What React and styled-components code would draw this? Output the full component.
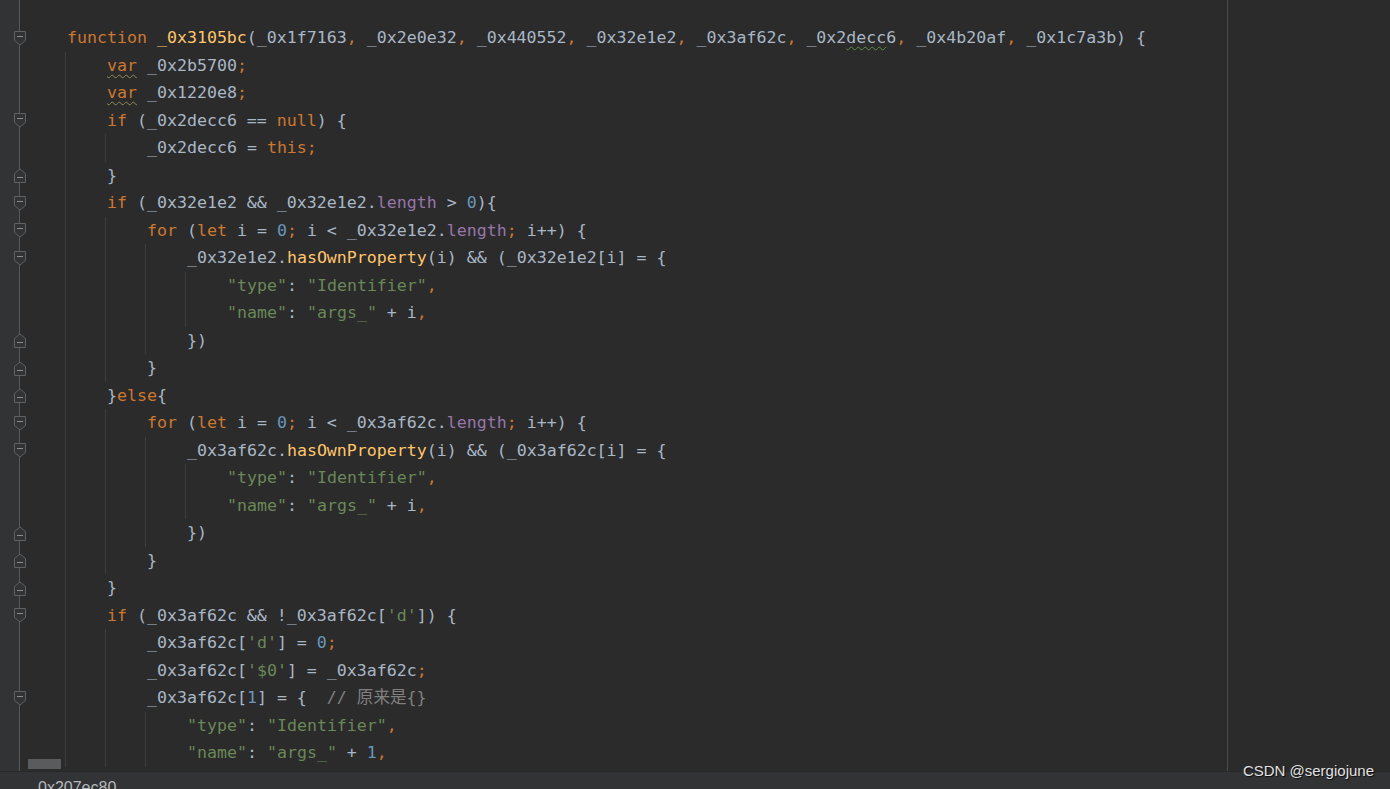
import React from 'react';
import styled, { createGlobalStyle } from 'styled-components';

const GlobalStyle = createGlobalStyle`
  * { box-sizing: border-box; }
  html, body {
    margin: 0;
    padding: 0;
    background: #2b2b2b;
    overflow: hidden;
  }
`;

const colors = {
  d: '#a9b7c6',
  k: '#cc7832',
  o: '#cc7832',
  n: '#6897bb',
  s: '#6a8759',
  p: '#9876aa',
  m: '#ffc66d',
  c: '#808080',
};

const Page = styled.div`
  position: relative;
  width: 1390px;
  height: 789px;
  overflow: hidden;
  background: #2b2b2b;
`;

const Editor = styled.div`
  position: relative;
  display: flex;
  height: 771px;
  overflow: hidden;
`;

const Gutter = styled.div`
  width: 20px;
  flex-shrink: 0;
  background: #313335;
  border-right: 1px solid #555759;
  padding-top: 24px;
`;

const FoldSlot = styled.div`
  display: flex;
  align-items: center;
  justify-content: flex-end;
  height: 27.5px;
  margin-right: -7px;
`;

const FoldMark = styled.svg`
  display: block;
  margin-top: 1px;
`;

const CodePane = styled.div`
  width: 1208px;
  flex-shrink: 0;
  border-right: 1px solid #4a4b4c;
  padding-top: 24px;
  padding-left: 45px;
  font-family: "DejaVu Sans Mono", "Noto Sans CJK SC", monospace;
  font-size: 16.6px;
  color: #a9b7c6;
`;

const Line = styled.div`
  display: flex;
  height: 27.5px;
  line-height: 27.5px;
  white-space: pre;
`;

const Guide = styled.span`
  width: 40px;
  flex-shrink: 0;
  border-left: 1px solid #3b3c3d;
`;

const Text = styled.span`
  padding-left: 2px;
`;

const Tok = styled.span`
  color: ${p => colors[p.$t] || colors.d};
  ${p => p.$wavy && `
    text-decoration: underline wavy ${p.$wavy};
    text-decoration-thickness: 1px;
    text-underline-offset: 3px;
  `}
`;

const Thumb = styled.div`
  position: absolute;
  left: 28px;
  bottom: 2px;
  width: 33px;
  height: 10px;
  background: #595b5d;
`;

const StatusBar = styled.div`
  height: 18px;
  background: #313335;
  border-top: 1px solid #282828;
  padding: 8px 0 0 38px;
  overflow: hidden;
  font-family: "Liberation Sans", Arial, sans-serif;
  font-size: 16px;
  line-height: 16px;
  color: #b4b8bc;
`;

const Watermark = styled.div`
  position: absolute;
  right: 16px;
  bottom: 10px;
  font-family: "Liberation Sans", Arial, sans-serif;
  font-size: 15px;
  color: #e2e2e2;
  text-shadow: 1px 1px 1px rgba(0, 0, 0, 0.8);
`;

const type = [['s', '"type"'], ['d', ': '], ['s', '"Identifier"'], ['o', ',']];
const name = [['s', '"name"'], ['d', ': '], ['s', '"args_"'], ['d', ' + i'], ['o', ',']];
const VARW = '#8f8a5a';

const lines = [
  [0, 'open', [['k', 'function'], ['d', ' '], ['m', '_0x3105bc'], ['d', '(_0x1f7163'], ['o', ', '], ['d', '_0x2e0e32'], ['o', ', '], ['d', '_0x440552'], ['o', ', '], ['d', '_0x32e1e2'], ['o', ', '], ['d', '_0x3af62c'], ['o', ', '], ['d', '_0x2'], ['d', 'decc', '#5f8c4a'], ['d', '6'], ['o', ', '], ['d', '_0x4b20af'], ['o', ', '], ['d', '_0x1c7a3b) {']]],
  [1, null, [['k', 'var', VARW], ['d', ' _0x2b5700'], ['o', ';']]],
  [1, null, [['k', 'var', VARW], ['d', ' _0x1220e8'], ['o', ';']]],
  [1, 'open', [['k', 'if'], ['d', ' (_0x2decc6 == '], ['k', 'null'], ['d', ') {']]],
  [2, null, [['d', '_0x2decc6 = '], ['k', 'this'], ['o', ';']]],
  [1, 'close', [['d', '}']]],
  [1, 'open', [['k', 'if'], ['d', ' (_0x32e1e2 && _0x32e1e2.'], ['p', 'length'], ['d', ' > '], ['n', '0'], ['d', '){']]],
  [2, 'open', [['k', 'for'], ['d', ' ('], ['k', 'let'], ['d', ' i = '], ['n', '0'], ['o', '; '], ['d', 'i < _0x32e1e2.'], ['p', 'length'], ['o', '; '], ['d', 'i++) {']]],
  [3, 'open', [['d', '_0x32e1e2.'], ['m', 'hasOwnProperty'], ['d', '(i) && (_0x32e1e2[i] = {']]],
  [4, null, type],
  [4, null, name],
  [3, 'close', [['d', '})']]],
  [2, 'close', [['d', '}']]],
  [1, 'close', [['d', '}'], ['k', 'else'], ['d', '{']]],
  [2, 'open', [['k', 'for'], ['d', ' ('], ['k', 'let'], ['d', ' i = '], ['n', '0'], ['o', '; '], ['d', 'i < _0x3af62c.'], ['p', 'length'], ['o', '; '], ['d', 'i++) {']]],
  [3, 'open', [['d', '_0x3af62c.'], ['m', 'hasOwnProperty'], ['d', '(i) && (_0x3af62c[i] = {']]],
  [4, null, type],
  [4, null, name],
  [3, 'close', [['d', '})']]],
  [2, 'close', [['d', '}']]],
  [1, 'close', [['d', '}']]],
  [1, 'open', [['k', 'if'], ['d', ' (_0x3af62c && !_0x3af62c['], ['s', "'d'"], ['d', ']) {']]],
  [2, null, [['d', '_0x3af62c['], ['s', "'d'"], ['d', '] = '], ['n', '0'], ['o', ';']]],
  [2, null, [['d', '_0x3af62c['], ['s', "'$0'"], ['d', '] = _0x3af62c'], ['o', ';']]],
  [2, 'open', [['d', '_0x3af62c['], ['n', '1'], ['d', '] = {  '], ['c', '// 原来是{}']]],
  [3, null, type],
  [3, null, [['s', '"name"'], ['d', ': '], ['s', '"args_"'], ['d', ' + '], ['n', '1'], ['o', ',']]],
];

function Fold({ kind })
{
  if (kind === 'open') {
    return (
      <FoldMark width="12" height="15" viewBox="0 0 12 15">
        <path d="M0.5 0.5 H11.5 V9.5 L6 14 L0.5 9.5 Z" fill="#313335" stroke="#5f6163" />
        <path d="M3 5.5 H9" stroke="#8a8c8e" />
      </FoldMark>
    );
  }
  return (
    <FoldMark width="12" height="15" viewBox="0 0 12 15">
      <path d="M0.5 14.5 H11.5 V5.5 L6 1 L0.5 5.5 Z" fill="#313335" stroke="#5f6163" />
      <path d="M3 9.5 H9" stroke="#8a8c8e" />
    </FoldMark>
  );
}

export default function App()
{
  return (
    <Page>
      <GlobalStyle />
      <Editor>
        <Gutter>
          {lines.map((l, i) => (
            <FoldSlot key={i}>{l[1] && <Fold kind={l[1]} />}</FoldSlot>
          ))}
        </Gutter>
        <CodePane>
          {lines.map(([level, , toks], i) => (
            <Line key={i}>
              {Array.from({ length: level }).map((_, g) => <Guide key={g} />)}
              <Text>
                {toks.map(([t, s, w], j) => <Tok key={j} $t={t} $wavy={w}>{s}</Tok>)}
              </Text>
            </Line>
          ))}
        </CodePane>
        <Thumb />
      </Editor>
      <StatusBar>0x207ec80</StatusBar>
      <Watermark>CSDN @sergiojune</Watermark>
    </Page>
  );
}
